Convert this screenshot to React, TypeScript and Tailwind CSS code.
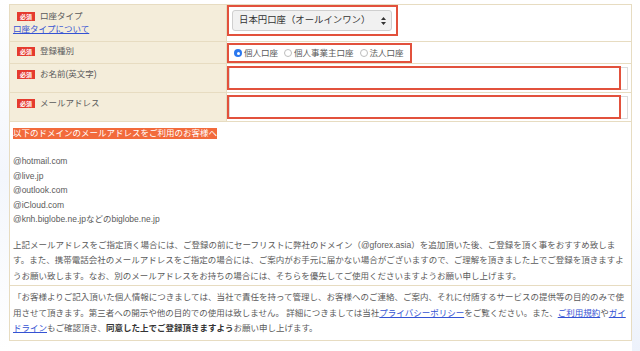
const line = "border-[#e7dcc1]";

function Badge() {
  return (
    <span className="flex h-[9px] w-[18px] shrink-0 items-center justify-center bg-[#e53b2f] text-[6px] font-bold leading-none text-white">
      必須
    </span>
  );
}

function Radio({ checked, label }: { checked?: boolean; label: string }) {
  return (
    <label className="mr-[6px] flex items-center">
      {checked ? (
        <span className="mr-[2px] flex h-[8px] w-[8px] items-center justify-center rounded-full bg-[#2a78ef]">
          <span className="h-[3px] w-[3px] rounded-full bg-white" />
        </span>
      ) : (
        <span className="mr-[2px] h-[8px] w-[8px] rounded-full border border-[#bdbdbd] bg-white" />
      )}
      <span>{label}</span>
    </label>
  );
}

function LabelCell({ text, pt }: { text: string; pt: string }) {
  return (
    <div className={`w-[217px] shrink-0 border-r ${line} bg-[#f4edda] pl-[7px] ${pt}`}>
      <div className="flex h-[9px] items-center">
        <Badge />
        <span className="ml-[5px] text-[8.5px] leading-[9px]">{text}</span>
      </div>
    </div>
  );
}

function InputRow({ label }: { label: string }) {
  return (
    <div className={`flex h-[29px] border-b ${line}`}>
      <LabelCell text={label} pt="pt-[6px]" />
      <div className="relative flex-1">
        <div className="ml-[2px] mt-[3px] h-[23px] w-[399px] border border-[#dcdcdc] bg-white" />
        <div className="absolute left-0 top-[2px] h-[24px] w-[394px] border-2 border-[#e2513c]" />
      </div>
    </div>
  );
}

export default function App() {
  return (
    <div className="flex h-[351px] w-[640px] overflow-hidden bg-white font-['Liberation_Sans','Noto_Sans_CJK_JP',sans-serif] text-[#5a5a5a]">
      <div className="w-[9px] shrink-0 bg-linear-to-b from-white via-[#f3f6fc] to-white" />

      <div className={`mt-[4px] w-[623px] shrink-0 self-start border ${line}`}>
        {/* 口座タイプ */}
        <div className={`flex h-[37px] border-b ${line}`}>
          <div className={`w-[217px] shrink-0 border-r ${line} bg-[#f4edda] pl-[3px] pt-[7px]`}>
            <div className="ml-[4px] flex h-[9px] items-center">
              <Badge />
              <span className="ml-[5px] text-[8.5px] leading-[9px]">口座タイプ</span>
            </div>
            <a className="mt-[3px] block text-[8.5px] leading-[11px] text-[#3553d3] underline">
              口座タイプについて
            </a>
          </div>
          <div className="flex-1">
            <div className="flex h-[31px] w-[171px] items-center border-2 border-[#e2513c] pl-[3px]">
              <div className="flex h-[21px] w-[160px] items-center rounded-[3px] border border-[#cfcfcf] bg-[#f1f1f1] pl-[6px] pr-[5px] text-[9.4px] text-[#333]">
                <span className="flex-1">日本円口座（オールインワン）</span>
                <svg width="5" height="8" viewBox="0 0 5 8">
                  <path d="M2.5 0L5 3H0z M2.5 8L5 5H0z" fill="#333" />
                </svg>
              </div>
            </div>
          </div>
        </div>

        {/* 登録種別 */}
        <div className={`flex h-[22px] border-b ${line}`}>
          <LabelCell text="登録種別" pt="pt-[5px]" />
          <div className="flex-1 pt-[1px]">
            <div className="flex h-[20px] w-[185px] items-center border-2 border-[#e2513c] pl-[5px] text-[8.5px]">
              <Radio checked label="個人口座" />
              <Radio label="個人事業主口座" />
              <Radio label="法人口座" />
            </div>
          </div>
        </div>

        <InputRow label="お名前(英文字)" />
        <InputRow label="メールアドレス" />

        {/* notice */}
        <div className={`border-b ${line} pb-[1px] pl-[3px] pr-[2px] pt-[6px] text-[8.5px]`}>
          <div className="h-[11px] leading-[11px]">
            <span className="inline-block h-[11px] bg-[#f26a3b] leading-[11px] text-white">
              以下のドメインのメールアドレスをご利用のお客様へ
            </span>
          </div>
          <div className="mt-[15px] leading-[14.5px]">
            <div>@hotmail.com</div>
            <div>@live.jp</div>
            <div>@outlook.com</div>
            <div>@iCloud.com</div>
            <div>@knh.biglobe.ne.jpなどのbiglobe.ne.jp</div>
          </div>
          <p className="mt-[11px] leading-[15.5px]">
            上記メールアドレスをご指定頂く場合には、ご登録の前にセーフリストに弊社のドメイン（@gforex.asia）を追加頂いた後、ご登録を頂く事をおすすめ致しま
            <br />
            す。また、携帯電話会社のメールアドレスをご指定の場合には、ご案内がお手元に届かない場合がございますので、ご理解を頂きました上でご登録を頂きますよ
            <br />
            うお願い致します。なお、別のメールアドレスをお持ちの場合には、そちらを優先してご使用くださいますようお願い申し上げます。
          </p>
        </div>

        <div className="pb-[3px] pl-[3px] pr-[2px] pt-[4px] text-[8.5px] leading-[15.5px]">
          「お客様よりご記入頂いた個人情報につきましては、当社で責任を持って管理し、お客様へのご連絡、ご案内、それに付随するサービスの提供等の目的のみで使
          <br />
          用させて頂きます。第三者への開示や他の目的での使用は致しません。 詳細につきましては当社
          <a className="text-[#3553d3] underline">プライバシーポリシー</a>
          をご覧ください。また、
          <a className="text-[#3553d3] underline">ご利用規約</a>や
          <a className="text-[#3553d3] underline">ガイ</a>
          <br />
          <a className="text-[#3553d3] underline">ドライン</a>
          もご確認頂き、
          <b className="text-[#333]">同意した上でご登録頂きますよう</b>
          お願い申し上げます。
        </div>
      </div>

      <div className="flex-1 bg-linear-to-b from-white from-50% to-[#edf2fb]" />
    </div>
  );
}
